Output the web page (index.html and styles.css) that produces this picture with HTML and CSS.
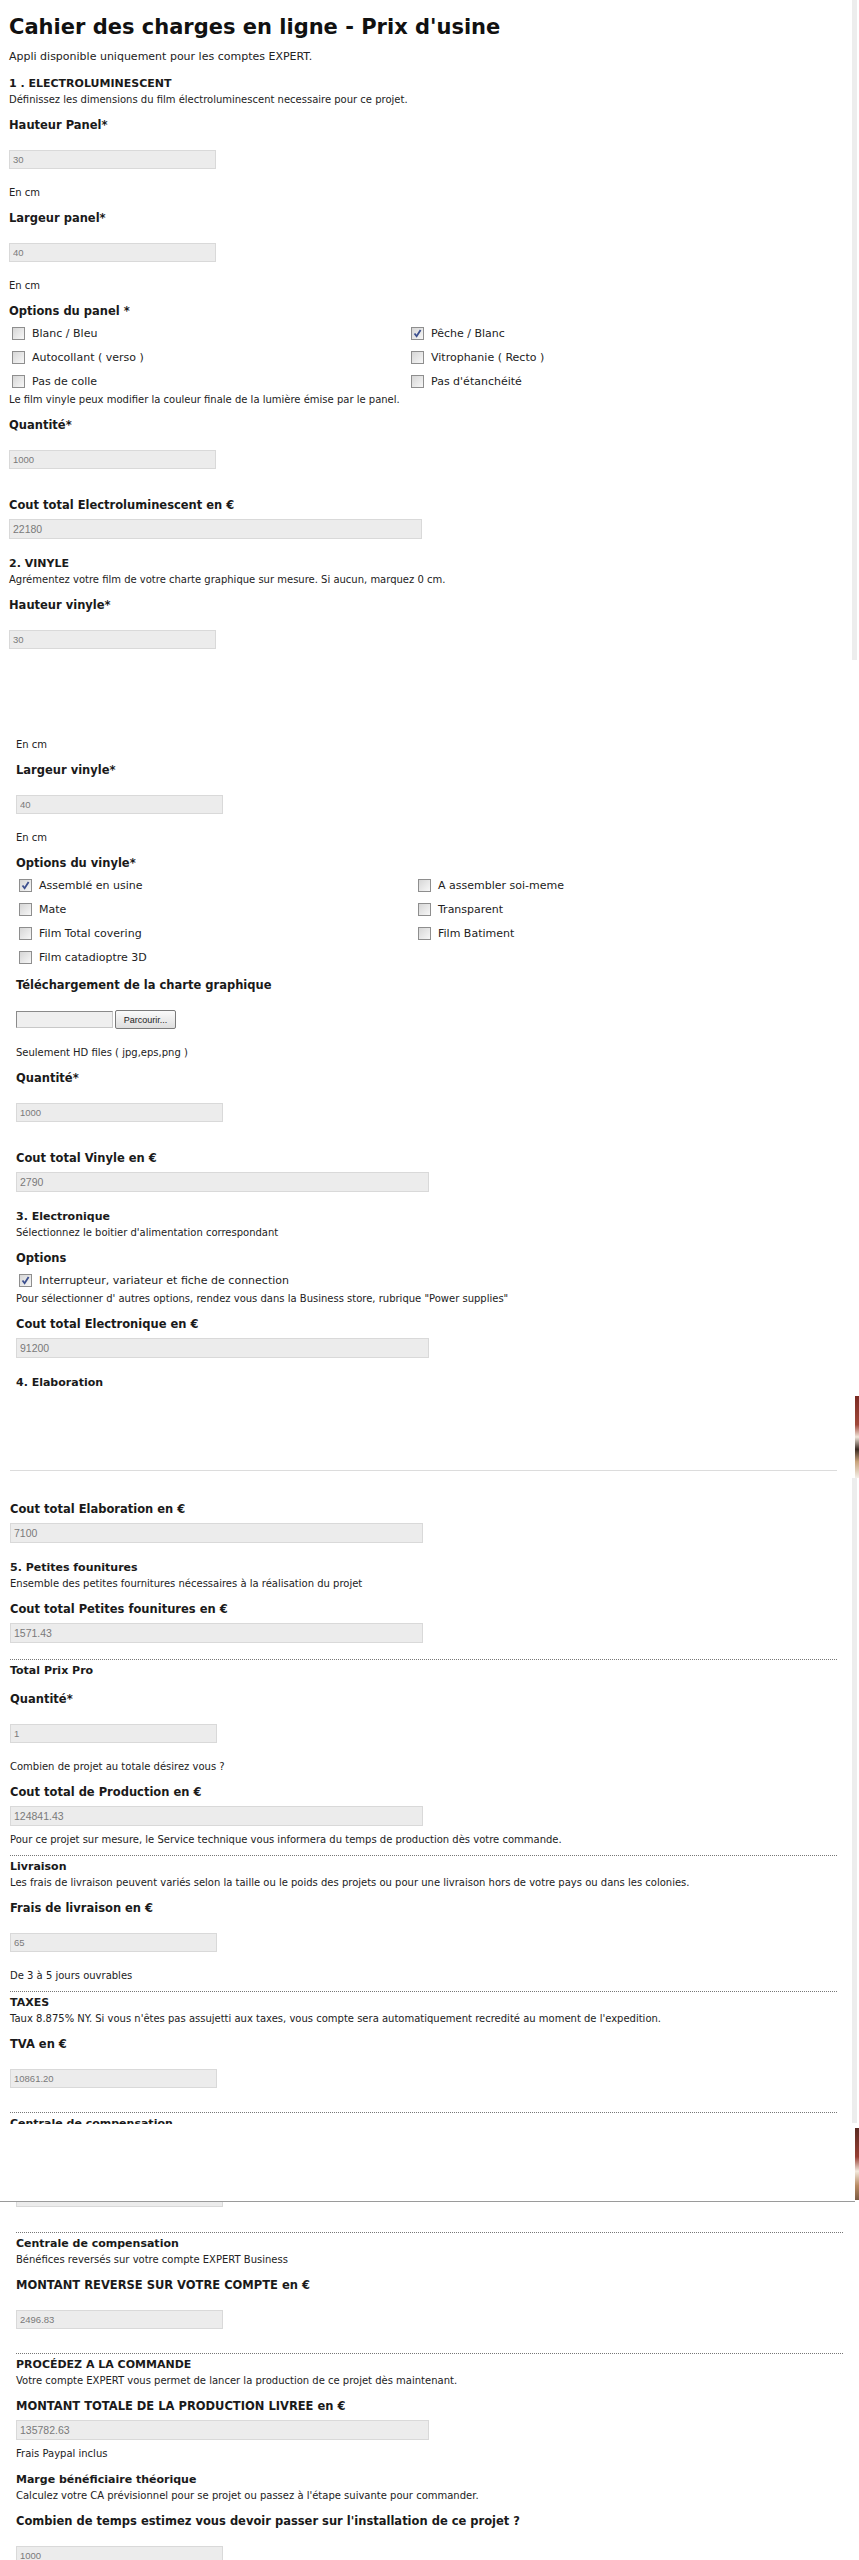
FILE: index.html
```html
<!DOCTYPE html>
<html lang="fr">
<head>
    <meta charset="UTF-8">
    <title>Cahier des charges en ligne - Prix d'usine</title>
    <link rel="stylesheet" href="styles.css">
</head>
<body>
    <div class="part part-a">
        <h1 class="title">Cahier des charges en ligne - Prix d'usine</h1>
        <p class="intro">Appli disponible uniquement pour les comptes EXPERT.</p>

        <h3 class="sec">1 . ELECTROLUMINESCENT</h3>
        <p class="desc">Définissez les dimensions du film électroluminescent necessaire pour ce projet.</p>
        <h4 class="label">Hauteur Panel*</h4>
        <input class="field" type="text" value="30" readonly>
        <p class="note">En cm</p>
        <h4 class="label">Largeur panel*</h4>
        <input class="field" type="text" value="40" readonly>
        <p class="note">En cm</p>
        <h4 class="label">Options du panel *</h4>
        <div class="checks">
            <label class="check"><span class="box"></span>Blanc / Bleu</label>
            <label class="check"><span class="box checked"><svg viewBox="0 0 11 11"><path d="M2.5 5.5 L4.6 8.2 L8.6 2"/></svg></span>Pêche / Blanc</label>
            <label class="check"><span class="box"></span>Autocollant ( verso )</label>
            <label class="check"><span class="box"></span>Vitrophanie ( Recto )</label>
            <label class="check"><span class="box"></span>Pas de colle</label>
            <label class="check"><span class="box"></span>Pas d'étanchéité</label>
        </div>
        <p class="note">Le film vinyle peux modifier la couleur finale de la lumière émise par le panel.</p>
        <h4 class="label">Quantité*</h4>
        <input class="field" type="text" value="1000" readonly>
        <h4 class="label">Cout total Electroluminescent en €</h4>
        <input class="field wide" type="text" value="22180" readonly>

        <h3 class="sec">2. VINYLE</h3>
        <p class="desc">Agrémentez votre film de votre charte graphique sur mesure. Si aucun, marquez 0 cm.</p>
        <h4 class="label">Hauteur vinyle*</h4>
        <input class="field" type="text" value="30" readonly>
    </div>

    <div class="part part-b">
        <p class="note">En cm</p>
        <h4 class="label">Largeur vinyle*</h4>
        <input class="field" type="text" value="40" readonly>
        <p class="note">En cm</p>
        <h4 class="label">Options du vinyle*</h4>
        <div class="checks">
            <label class="check"><span class="box checked"><svg viewBox="0 0 11 11"><path d="M2.5 5.5 L4.6 8.2 L8.6 2"/></svg></span>Assemblé en usine</label>
            <label class="check"><span class="box"></span>A assembler soi-meme</label>
            <label class="check"><span class="box"></span>Mate</label>
            <label class="check"><span class="box"></span>Transparent</label>
            <label class="check"><span class="box"></span>Film Total covering</label>
            <label class="check"><span class="box"></span>Film Batiment</label>
            <label class="check"><span class="box"></span>Film catadioptre 3D</label>
        </div>
        <h4 class="label">Téléchargement de la charte graphique</h4>
        <div class="upload">
            <input class="upload-text" type="text" readonly>
            <button class="upload-btn" type="button">Parcourir...</button>
        </div>
        <p class="note">Seulement HD files ( jpg,eps,png )</p>
        <h4 class="label">Quantité*</h4>
        <input class="field" type="text" value="1000" readonly>
        <h4 class="label">Cout total Vinyle en €</h4>
        <input class="field wide" type="text" value="2790" readonly>

        <h3 class="sec">3. Electronique</h3>
        <p class="desc">Sélectionnez le boitier d'alimentation correspondant</p>
        <h4 class="label">Options</h4>
        <div class="checks single">
            <label class="check"><span class="box checked"><svg viewBox="0 0 11 11"><path d="M2.5 5.5 L4.6 8.2 L8.6 2"/></svg></span>Interrupteur, variateur et fiche de connection</label>
        </div>
        <p class="note">Pour sélectionner d' autres options, rendez vous dans la Business store, rubrique "Power supplies"</p>
        <h4 class="label">Cout total Electronique en €</h4>
        <input class="field wide" type="text" value="91200" readonly>

        <h3 class="sec">4. Elaboration</h3>
    </div>

    <div class="part part-c">
        <hr class="rule solid">
        <h4 class="label">Cout total Elaboration en €</h4>
        <input class="field wide" type="text" value="7100" readonly>

        <h3 class="sec">5. Petites founitures</h3>
        <p class="desc">Ensemble des petites fournitures nécessaires à la réalisation du projet</p>
        <h4 class="label">Cout total Petites founitures en €</h4>
        <input class="field wide" type="text" value="1571.43" readonly>

        <hr class="rule">
        <h3 class="sec">Total Prix Pro</h3>
        <h4 class="label">Quantité*</h4>
        <input class="field" type="text" value="1" readonly>
        <p class="note">Combien de projet au totale désirez vous ?</p>
        <h4 class="label">Cout total de Production en €</h4>
        <input class="field wide" type="text" value="124841.43" readonly>
        <p class="note">Pour ce projet sur mesure, le Service technique vous informera du temps de production dès votre commande.</p>

        <hr class="rule">
        <h3 class="sec">Livraison</h3>
        <p class="desc">Les frais de livraison peuvent variés selon la taille ou le poids des projets ou pour une livraison hors de votre pays ou dans les colonies.</p>
        <h4 class="label">Frais de livraison en €</h4>
        <input class="field" type="text" value="65" readonly>
        <p class="note">De 3 à 5 jours ouvrables</p>

        <hr class="rule">
        <h3 class="sec">TAXES</h3>
        <p class="desc">Taux 8.875% NY. Si vous n'êtes pas assujetti aux taxes, vous compte sera automatiquement recredité au moment de l'expedition.</p>
        <h4 class="label">TVA en €</h4>
        <input class="field" type="text" value="10861.20" readonly>

        <hr class="rule">
        <div class="cut">
            <h3 class="sec">Centrale de compensation</h3>
        </div>
    </div>

    <div class="part part-d">
        <div class="stub"></div>
        <hr class="rule">
        <h3 class="sec">Centrale de compensation</h3>
        <p class="desc">Bénéfices reversés sur votre compte EXPERT Business</p>
        <h4 class="label">MONTANT REVERSE SUR VOTRE COMPTE en €</h4>
        <input class="field" type="text" value="2496.83" readonly>

        <hr class="rule">
        <h3 class="sec">PROCÉDEZ A LA COMMANDE</h3>
        <p class="desc">Votre compte EXPERT vous permet de lancer la production de ce projet dès maintenant.</p>
        <h4 class="label">MONTANT TOTALE DE LA PRODUCTION LIVREE en €</h4>
        <input class="field wide" type="text" value="135782.63" readonly>
        <p class="note">Frais Paypal inclus</p>

        <h3 class="sec">Marge bénéficiaire théorique</h3>
        <p class="desc">Calculez votre CA prévisionnel pour se projet ou passez à l'étape suivante pour commander.</p>
        <h4 class="label">Combien de temps estimez vous devoir passer sur l'installation de ce projet ?</h4>
        <input class="field" type="text" value="1000" readonly>
    </div>

    <!-- bits of the window edge left in the capture -->
    <div class="edge edge-bar-top"></div>
    <div class="edge edge-bar-bottom"></div>
    <div class="edge edge-photo-a"></div>
    <div class="edge edge-photo-b"></div>
</body>
</html>
```

FILE: styles.css
```css
body {
    margin: 0;
    padding: 0;
    font-family: "DejaVu Sans", Verdana, sans-serif;
    color: #222;
    background: #fff;
    position: relative;
    min-height: 2560px;
    overflow: hidden;
}

.part {
    display: flex;
    flex-direction: column;
    align-items: flex-start;
}

.part > :first-child {
    margin-top: 0;
}

.part-a {
    padding: 13px 0 0 9px;
}

.part-b {
    padding: 89px 0 0 16px;
}

.part-c {
    padding: 80px 0 0 10px;
}

.part-d {
    margin: 77px 4px 0 0;
    padding-left: 16px;
    border-top: 1px solid #9a9a9a;
}

.title {
    margin: 0;
    font-size: 21px;
    line-height: 28px;
    font-weight: bold;
    color: #111;
}

.intro {
    margin: 9px 0 0;
    font-size: 11px;
    line-height: 14px;
}

.sec {
    margin: 18px 0 0;
    font-size: 11px;
    line-height: 14px;
    font-weight: bold;
    color: #1a1a1a;
}

.intro + .sec {
    margin-top: 13px;
}

.rule + .sec {
    margin-top: 4px;
}

.note + .sec {
    margin-top: 12px;
}

.desc {
    margin: 2px 0 0;
    font-size: 10px;
    line-height: 14px;
}

.label {
    margin: 10px 0 0;
    font-size: 11.5px;
    line-height: 16px;
    font-weight: bold;
    color: #1a1a1a;
}

.field + .label {
    margin-top: 28px;
}

.checks + .label {
    margin-top: 8px;
}

.sec + .label {
    margin-top: 13px;
}

.rule.solid + .label {
    margin-top: 30px;
}

.note {
    margin: 17px 0 0;
    font-size: 10px;
    line-height: 14px;
}

.field.wide + .note {
    margin-top: 7px;
}

.checks + .note {
    margin-top: 0;
}

.field {
    box-sizing: border-box;
    margin: 17px 0 0;
    width: 207px;
    height: 19px;
    padding: 0 3px;
    font-family: "Liberation Sans", Arial, sans-serif;
    font-size: 9.5px;
    color: #7a7a7a;
    background: #ececec;
    border: 1px solid #d9d9d9;
    outline: none;
}

.field.wide {
    margin-top: 6px;
    width: 413px;
    height: 20px;
    font-size: 10.5px;
}

.checks {
    margin-top: 2px;
    display: grid;
    grid-template-columns: 399px 300px;
}

.checks.single {
    grid-template-columns: 1fr;
}

.check {
    display: flex;
    align-items: center;
    height: 24px;
    font-size: 11px;
    padding-left: 3px;
}

.box {
    box-sizing: border-box;
    width: 13px;
    height: 13px;
    margin-right: 7px;
    border: 1px solid #8e8e8e;
    background: linear-gradient(135deg, #d6d6d6, #f7f7f7);
    display: flex;
    align-items: center;
    justify-content: center;
}

.box svg {
    width: 11px;
    height: 11px;
    fill: none;
    stroke: #3c4f8e;
    stroke-width: 1.8;
}

.upload {
    margin-top: 17px;
    display: flex;
    align-items: center;
    gap: 2px;
}

.upload-text {
    box-sizing: border-box;
    width: 97px;
    height: 17px;
    background: #efefef;
    border: 1px solid #c8c8c8;
    border-top-color: #8a8a8a;
    border-left-color: #8a8a8a;
}

.upload-btn {
    box-sizing: border-box;
    width: 61px;
    height: 19px;
    padding: 0;
    font-family: "Liberation Sans", Arial, sans-serif;
    font-size: 9px;
    color: #222;
    background: linear-gradient(#fafafa, #dedede);
    border: 1px solid #7a7a7a;
    border-radius: 2px;
}

.rule {
    margin: 16px 0 0;
    width: 827px;
    height: 0;
    border: none;
    border-top: 1px dotted #777;
}

.note + .rule {
    margin-top: 8px;
}

.field + .rule {
    margin-top: 24px;
}

.field.wide + .rule {
    margin-top: 16px;
}

.stub + .rule {
    margin-top: 25px;
}

.rule.solid {
    border-top: 1px solid #dcdcdc;
}

.cut {
    margin-top: 4px;
    height: 7px;
    overflow: hidden;
}

.cut .sec {
    margin-top: 0;
}

.stub {
    box-sizing: border-box;
    width: 207px;
    height: 5px;
    background: #ececec;
    border: 1px solid #d9d9d9;
    border-top: none;
}

.edge {
    position: absolute;
    right: 0;
}

.edge-bar-top {
    top: 0;
    height: 660px;
    width: 5px;
    right: 2px;
    background: #ededed;
}

.edge-bar-bottom {
    top: 1478px;
    height: 645px;
    width: 5px;
    right: 2px;
    background: #ededed;
}

.edge-photo-a {
    top: 1396px;
    height: 82px;
    width: 4px;
    background: linear-gradient(#7a2a22 0%, #a0483a 35%, #f1e6da 50%, #3a2a22 65%, #c8a27a 80%, #f4efe8 100%);
}

.edge-photo-b {
    top: 2128px;
    height: 72px;
    width: 4px;
    background: linear-gradient(#5a2a22 0%, #963e32 40%, #f3e9dd 60%, #b88a62 80%, #7a5a42 100%);
}
```
